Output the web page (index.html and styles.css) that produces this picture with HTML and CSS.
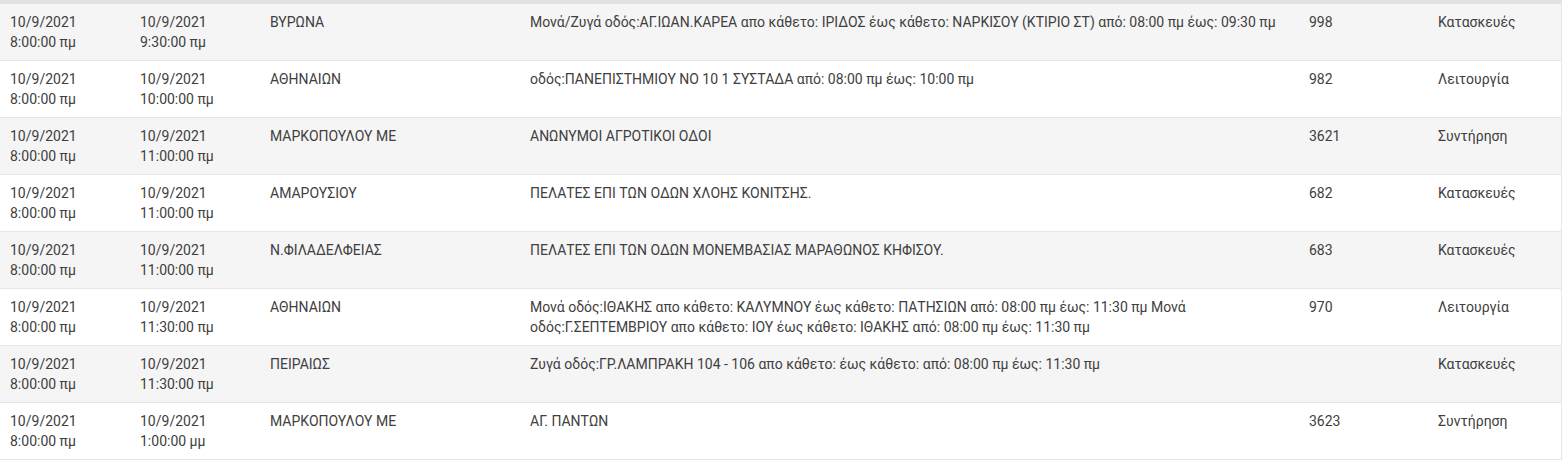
FILE: index.html
```html
<!DOCTYPE html>
<html lang="el">
<head>
<meta charset="utf-8">
<link rel="stylesheet" href="styles.css">
</head>
<body>
<div class="wrap">
<table class="grid">
<colgroup>
<col class="c-start"><col class="c-end"><col class="c-area"><col class="c-desc"><col class="c-num"><col class="c-type">
</colgroup>
<tbody>
<tr><td>10/9/2021<br>8:00:00 πμ</td><td>10/9/2021<br>9:30:00 πμ</td><td>ΒΥΡΩΝΑ</td><td>Μονά/Ζυγά οδός:ΑΓ.ΙΩΑΝ.ΚΑΡΕΑ απο κάθετο: ΙΡΙΔΟΣ έως κάθετο: ΝΑΡΚΙΣΟΥ (ΚΤΙΡΙΟ ΣΤ) από: 08:00 πμ έως: 09:30 πμ</td><td>998</td><td>Κατασκευές</td></tr>
<tr><td>10/9/2021<br>8:00:00 πμ</td><td>10/9/2021<br>10:00:00 πμ</td><td>ΑΘΗΝΑΙΩΝ</td><td>οδός:ΠΑΝΕΠΙΣΤΗΜΙΟΥ ΝΟ 10 1 ΣΥΣΤΑΔΑ από: 08:00 πμ έως: 10:00 πμ</td><td>982</td><td>Λειτουργία</td></tr>
<tr><td>10/9/2021<br>8:00:00 πμ</td><td>10/9/2021<br>11:00:00 πμ</td><td>ΜΑΡΚΟΠΟΥΛΟΥ ΜΕ</td><td>ΑΝΩΝΥΜΟΙ ΑΓΡΟΤΙΚΟΙ ΟΔΟΙ</td><td>3621</td><td>Συντήρηση</td></tr>
<tr><td>10/9/2021<br>8:00:00 πμ</td><td>10/9/2021<br>11:00:00 πμ</td><td>ΑΜΑΡΟΥΣΙΟΥ</td><td>ΠΕΛΑΤΕΣ ΕΠΙ ΤΩΝ ΟΔΩΝ ΧΛΟΗΣ ΚΟΝΙΤΣΗΣ.</td><td>682</td><td>Κατασκευές</td></tr>
<tr><td>10/9/2021<br>8:00:00 πμ</td><td>10/9/2021<br>11:00:00 πμ</td><td>Ν.ΦΙΛΑΔΕΛΦΕΙΑΣ</td><td>ΠΕΛΑΤΕΣ ΕΠΙ ΤΩΝ ΟΔΩΝ ΜΟΝΕΜΒΑΣΙΑΣ ΜΑΡΑΘΩΝΟΣ ΚΗΦΙΣΟΥ.</td><td>683</td><td>Κατασκευές</td></tr>
<tr><td>10/9/2021<br>8:00:00 πμ</td><td>10/9/2021<br>11:30:00 πμ</td><td>ΑΘΗΝΑΙΩΝ</td><td>Μονά οδός:ΙΘΑΚΗΣ απο κάθετο: ΚΑΛΥΜΝΟΥ έως κάθετο: ΠΑΤΗΣΙΩΝ από: 08:00 πμ έως: 11:30 πμ Μονά οδός:Γ.ΣΕΠΤΕΜΒΡΙΟΥ απο κάθετο: ΙΟΥ έως κάθετο: ΙΘΑΚΗΣ από: 08:00 πμ έως: 11:30 πμ</td><td>970</td><td>Λειτουργία</td></tr>
<tr><td>10/9/2021<br>8:00:00 πμ</td><td>10/9/2021<br>11:30:00 πμ</td><td>ΠΕΙΡΑΙΩΣ</td><td>Ζυγά οδός:ΓΡ.ΛΑΜΠΡΑΚΗ 104 - 106 απο κάθετο: έως κάθετο: από: 08:00 πμ έως: 11:30 πμ</td><td></td><td>Κατασκευές</td></tr>
<tr><td>10/9/2021<br>8:00:00 πμ</td><td>10/9/2021<br>1:00:00 μμ</td><td>ΜΑΡΚΟΠΟΥΛΟΥ ΜΕ</td><td>ΑΓ. ΠΑΝΤΩΝ</td><td>3623</td><td>Συντήρηση</td></tr>
</tbody>
</table>
</div>
</body>
</html>
```
FILE: styles.css
```css
html, body {
  margin: 0;
  padding: 0;
  background: #ffffff;
}
.wrap {
  width: 1562px;
  border-top: 4px solid #e2e2e2;
  border-right: 1px solid #e6e6e6;
  box-sizing: border-box;
}
.grid {
  width: 100%;
  border-collapse: collapse;
  table-layout: fixed;
  font-family: Roboto, "Noto Sans", sans-serif;
  font-size: 14px;
  line-height: 20px;
  color: #404040;
}
.c-start { width: 130px; }
.c-end { width: 130px; }
.c-area { width: 260px; }
.c-desc { width: 779px; }
.c-num { width: 129px; }
.c-type { width: auto; }
.grid td {
  vertical-align: top;
  padding: 8px 10px 8px 10px;
  height: 40px;
  border-bottom: 1px solid #e6e6e6;
}
.grid tr:nth-child(odd) td {
  background: #f5f5f5;
}
```
